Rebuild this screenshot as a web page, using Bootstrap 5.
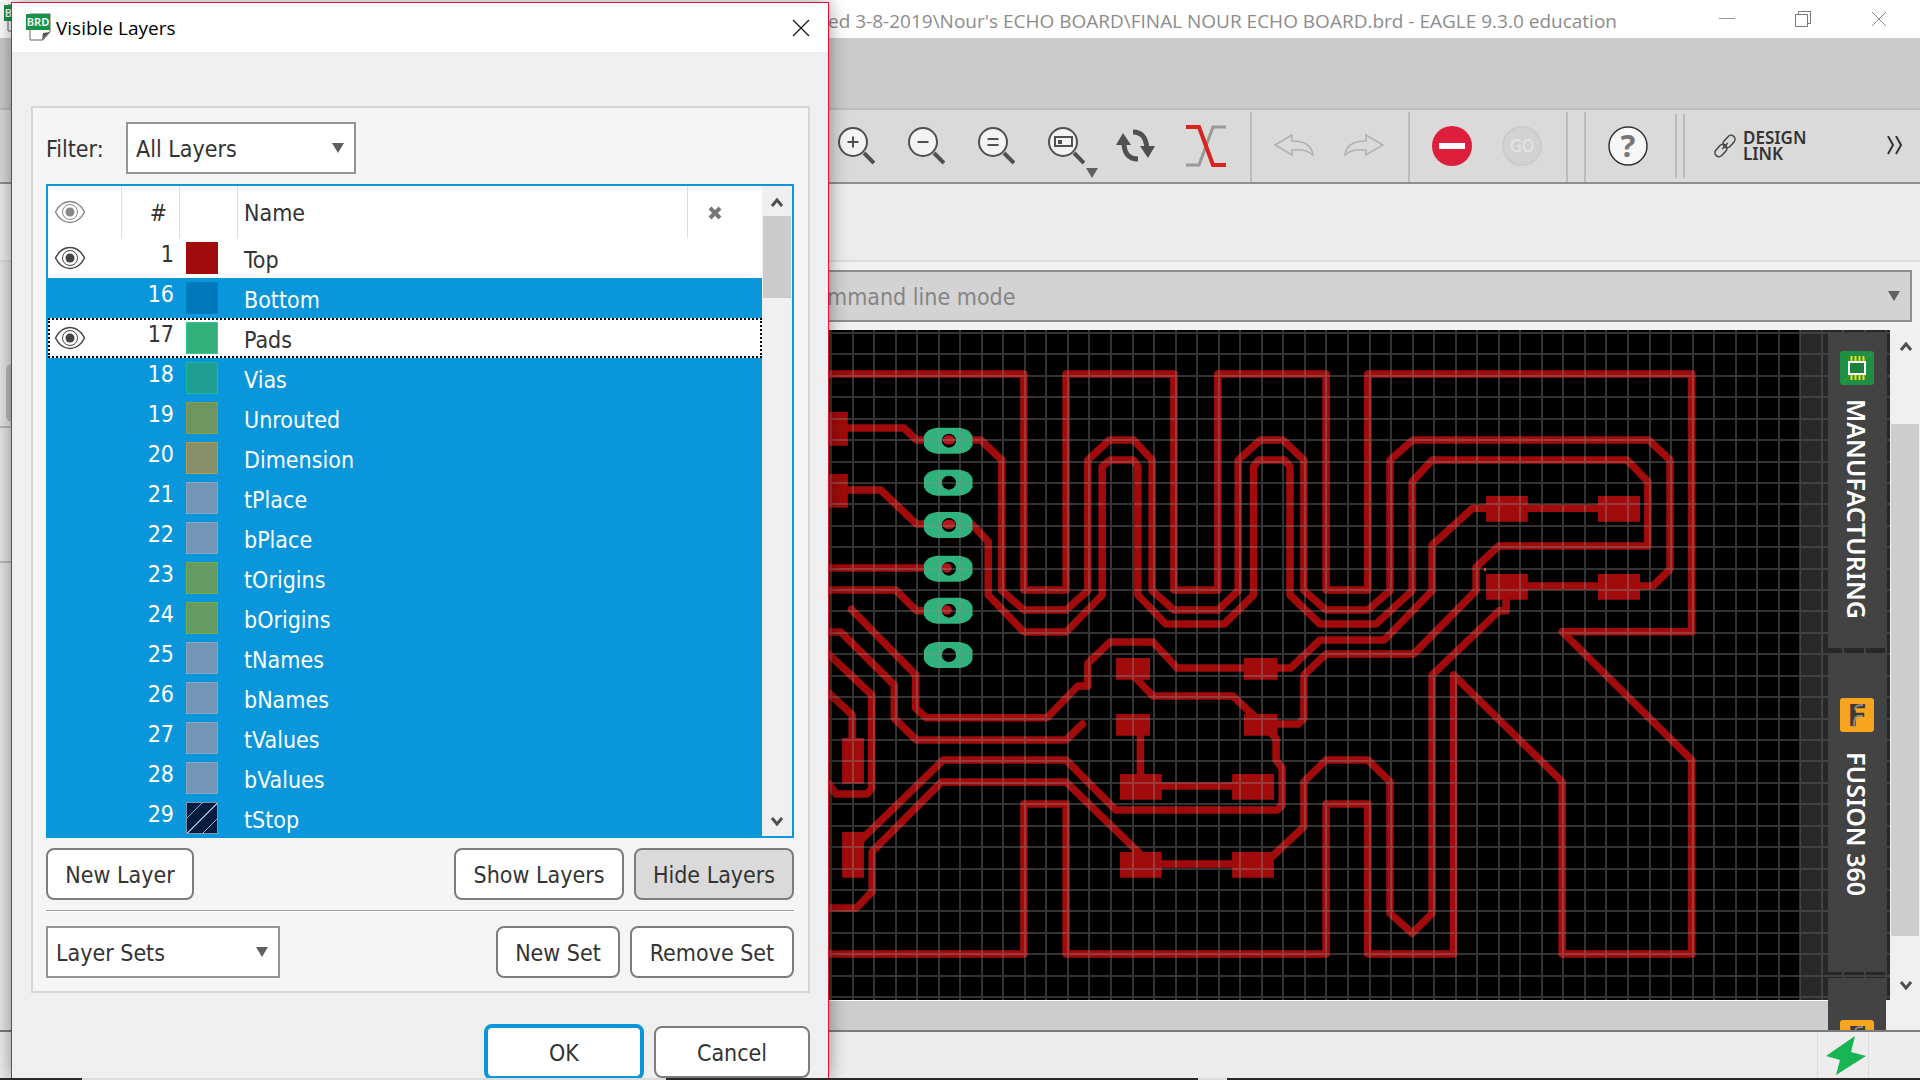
<!DOCTYPE html>
<html lang="en">
<head>
<meta charset="utf-8">
<meta name="viewport" content="width=device-width, initial-scale=1">
<title>EAGLE board editor - Visible Layers</title>
<link href="https://cdn.jsdelivr.net/npm/bootstrap@5.3.0/dist/css/bootstrap.min.css" rel="stylesheet">
<script src="https://cdn.jsdelivr.net/npm/bootstrap@5.3.0/dist/js/bootstrap.bundle.min.js"></script>
<style>
  :root { --ui: "DejaVu Sans Condensed", "Noto Sans", sans-serif; --win: "Open Sans", "Noto Sans", sans-serif; --accent: #0996db; --edge: #8f8f8f; }
  body { font-family: var(--ui); font-size: 23px; line-height: 28px; color: #333; background: #ededed; overflow: hidden; }
  svg { display: block; flex: none; }
  button { font-family: inherit; }

  /* main window */
  .app-title { height: 38px; background: #fff; color: #8c8c8c; font: 19px/38px var(--win); padding: 0 3px 0 4px; }
  .app-title .caption-text { margin-left: 796px; padding-top: 2px; }
  .win-btn { border: 0; background: none; padding: 0; width: 76px; height: 38px; display: flex; align-items: center; justify-content: center; }
  .menu-band { height: 72px; background: #cbcbcb; border-bottom: 2px solid #bdbdbd; }
  .tool-band { height: 74px; background: #dadada; border-bottom: 2px solid var(--edge); padding-left: 821px; }
  .tool-btn { width: 70px; height: 72px; border: 0; padding: 0; background: none; display: flex; align-items: center; justify-content: center; position: relative; }
  .tool-btn .drop-mark { position: absolute; right: 3px; bottom: 4px; }
  .tool-sep { width: 2px; height: 70px; background: #bcbcbc; margin: 2px 7px 0 9px; }
  .tool-sep.thin { height: 64px; margin: 4px 6px 4px 0; }
  .thin-pair { margin: 0 23px 0 12px; }
  .design-btn { width: auto; gap: 7px; }
  .link-label { font: 600 17px/16px "Noto Sans", sans-serif; color: #333; text-align: left; }
  .opt-band { height: 78px; background: #ededed; border-bottom: 2px solid #dcdcdc; }
  .palette { width: 14px; background: #e6e6e6; padding-top: 102px; }
  .palette .active-tool { height: 58px; width: 20px; margin-left: 6px; background: #bdbdbd; border-radius: 6px; }
  .palette .rule { height: 2px; background: #bbb; margin-bottom: 133px; }
  .work-col { background: #f2f2f2; }
  .cmd-row { padding: 8px 8px 8px 0; }
  .form-select { --bs-form-select-bg-img: url("data:image/svg+xml,%3Csvg xmlns='http://www.w3.org/2000/svg' viewBox='0 0 12 10'%3E%3Cpath d='M0 0h12L6 10z' fill='%23606060'/%3E%3C/svg%3E"); }
  .cmd-box.form-select { height: 52px; border: 2px solid var(--edge); border-radius: 0; background-color: #d3d3d3; color: #858585; font-size: 23px; line-height: 28px; padding: 11px 40px 9px 811px; background-position: right 10px center; background-size: 12px 10px; }
  .board { background: #000; }
  .board svg { width: 100%; height: 100%; }
  .h-scroll { height: 30px; background: #cdcdcd; border-top: 1px solid #fff; }
  .v-scroll { width: 30px; background: #f0f0f0; padding: 12px 0 40px 1px; }
  .v-scroll .thumb { background: #cdcdcd; margin: 72px 1px 44px 0; }
  .side-dock { position: absolute; top: 0; right: 0; bottom: 30px; width: 90px; background: rgba(80,80,80,.5); }
  .side-tabs { position: absolute; top: 3px; right: 4px; bottom: 0; width: 58px; overflow: hidden; gap: 6px; }
  .side-tab { background: #434343; color: #fff; border: 0; padding: 18px 0 0; width: 58px; display: flex; flex-direction: column; align-items: center; gap: 14px; flex: none; height: 315px; }
  .side-tab.second { height: 318px; padding-top: 44px; gap: 20px; }
  .side-tab.third { height: 80px; padding-top: 42px; }
  .side-tab span { writing-mode: vertical-rl; font: 600 25px/32px "Noto Sans", sans-serif; }
  .dock-corner { position: absolute; right: 0; bottom: 0; width: 4px; height: 30px; background: #f0f0f0; }
  .status-band { height: 50px; border-top: 2px solid #7c7c7c; background: #ededed; }
  .status-slot { width: 52px; border: solid #dcdcdc; border-width: 0 1px; margin-right: 51px; padding: 4px 0 0 8px; }
  .screen-edge { position: absolute; left: 0; right: 0; bottom: 0; height: 2px; z-index: 5; }
  .screen-edge .dark { background: #2b2729; }
  .screen-edge .pale { background: #dcdcdc; }

  /* Visible Layers window */
  .dlg { position: absolute; left: 11px; top: 2px; bottom: 0; width: 818px; border: 1px solid #e8112d; background: #efefef; box-shadow: 0 0 18px rgba(0,0,0,.4); overflow: hidden; }
  .dlg-title { height: 49px; background: #fff; color: #000; font: 19px/49px var(--win); padding: 0 18px 0 14px; gap: 4px; }
  .dlg-title .dlg-name { padding-top: 2px; }
  .group-panel { margin: 54px 18px 0 19px; border: 2px solid #d6d6d6; background: #f5f5f5; padding: 14px 14px 13px 13px; }
  .pick-box.form-select { height: 52px; width: 230px; border: 2px solid #959595; border-radius: 0; background-color: #fff; color: #333; font-size: 23px; line-height: 28px; padding: 11px 30px 9px 8px; background-position: right 10px center; background-size: 12px 10px; }
  .pick-box.wide.form-select { width: 234px; }
  .filter-label { width: 80px; padding-top: 2px; }
  .layer-box { border: 2px solid var(--accent); height: 654px; background: #fff; margin: 10px 0; overflow: hidden; }
  .layer-grid { width: 100%; table-layout: fixed; border-collapse: separate; border-spacing: 0; }
  .layer-grid th { height: 52px; font-weight: 400; padding: 2px 0 0; border-right: 1px solid #dedede; vertical-align: middle; }
  .layer-grid td { height: 40px; padding: 0; vertical-align: middle; }
  .layer-grid .c-eye { padding: 0 0 0 6px; }
  .layer-grid .c-num { text-align: right; padding-right: 6px; }
  .layer-grid td.c-num { padding-bottom: 8px; }
  .layer-grid th.c-num { padding-right: 12px; }
  .layer-grid .c-name { padding-left: 6px; }
  .layer-grid td.c-name { padding-top: 3px; }
  .layer-grid .c-sw { padding-left: 6px; }
  .layer-grid .c-clear { border-right: 0; padding-left: 20px; }
  .layer-grid tr.picked td { background: var(--accent); color: #fff; }
  .layer-grid tr.current { outline: 2px dotted #000; outline-offset: -2px; }
  .swatch { width: 32px; height: 32px; background: var(--c); border: 1px solid var(--e); }
  .swatch.hatched { background: #031d40 repeating-linear-gradient(135deg, transparent 0 10px, #9fb0c4 10px 11px); }
  .list-scroll { width: 30px; flex: none; background: #f0f0f0; padding: 12px 1px 10px; }
  .list-scroll .thumb { height: 82px; background: #cbcbcb; margin-top: 8px; }
  .btn-eagle { --bs-btn-font-size: 23px; --bs-btn-line-height: 28px; --bs-btn-color: #333; --bs-btn-bg: #fff; --bs-btn-border-color: #7d7d7d; --bs-btn-border-width: 2px; --bs-btn-border-radius: 8px; --bs-btn-hover-bg: #eee; --bs-btn-hover-color: #333; font-family: var(--ui); height: 52px; white-space: nowrap; padding: 11px 8px 9px; }
  .btn-eagle.pressed { --bs-btn-bg: #dadada; }
  .btn-eagle.primary-one { --bs-btn-border-color: var(--accent); --bs-btn-border-width: 4px; height: 56px; width: 160px; }
  .btn-line { gap: 10px; }
  .panel-rule { height: 2px; background: #fff; border-top: 1px solid #a0a0a0; margin: 10px 0 14px; }
  .answer-row { padding: 31px 18px 0 0; gap: 10px; }
  .w-a { width: 148px; } .w-b { width: 170px; } .w-c { width: 160px; } .w-d { width: 124px; } .w-e { width: 164px; } .w-f { width: 156px; margin-bottom: 2px; }
</style>
</head>
<body>
<svg width="0" height="0" class="position-absolute" aria-hidden="true">
  <defs>
    <g id="lens"><circle cx="16" cy="16" r="14" fill="#f3f3f3" stroke="#505050" stroke-width="2"/><path d="M27 27l10 10" stroke="#505050" stroke-width="4"/></g>
    <g id="eye" fill="none"><path d="M1.500 12C5 5 10 1.500 16 1.500S27 5 30.500 12C27 19 22 22.500 16 22.500S5 19 1.500 12z" stroke="currentColor" stroke-width="1.500"/><circle cx="16" cy="12" r="7.500" stroke="currentColor"/><circle cx="16" cy="12" r="4.500" fill="currentColor"/></g>
    <g id="brd"><path d="M4 1h20v18l-7 8H4z" fill="#fff" stroke="#666"/><path d="M24 19l-8 8 1-7z" fill="#555"/><rect x="0" y="1" width="24" height="16" fill="#159447"/><text x="12" y="13" font-family="Noto Sans, sans-serif" font-weight="600" font-size="11" fill="#fff" text-anchor="middle">BRD</text></g>
    <g id="fusion"><rect width="34" height="34" rx="3" fill="#f7a51f"/><text x="17" y="28" font-family="Roboto, sans-serif" font-weight="900" font-size="31" fill="#3f3a36" text-anchor="middle">F</text><path d="M14 29c0-8 1-10 4-11h5M15 12c0-4 2-5 8-5" stroke="#8b8b86" stroke-width="2" fill="none"/></g>
  </defs>
</svg>

<div class="d-flex flex-column vh-100">
  <header class="app-title d-flex">
    <svg width="28" height="30" class="mt-1" aria-hidden="true"><use href="#brd"/></svg>
    <div class="caption-text flex-grow-1 text-nowrap">ed 3-8-2019\Nour's ECHO BOARD\FINAL NOUR ECHO BOARD.brd - EAGLE 9.3.0 education</div>
    <button class="win-btn" aria-label="Minimize"><svg width="16" height="16"><path d="M0 7.500h16" stroke="#999"/></svg></button>
    <button class="win-btn" aria-label="Restore"><svg width="16" height="16" fill="none" stroke="#777"><path d="M.5 3.500h12v12H.5zM3.500 3V.5h12v12H13"/></svg></button>
    <button class="win-btn" aria-label="Close"><svg width="16" height="16"><path d="M1 1l14 14M15 1L1 15" stroke="#888"/></svg></button>
  </header>
  <div class="menu-band"></div>

  <nav class="tool-band d-flex" aria-label="Tools">
    <button class="tool-btn" aria-label="Zoom in"><svg width="38" height="40"><use href="#lens"/><path d="M10.500 16h11M16 10.500v11" stroke="#505050" stroke-width="2"/></svg></button>
    <button class="tool-btn" aria-label="Zoom out"><svg width="38" height="40"><use href="#lens"/><path d="M10.500 16h11" stroke="#505050" stroke-width="2"/></svg></button>
    <button class="tool-btn" aria-label="Zoom to fit"><svg width="38" height="40"><use href="#lens"/><path d="M10.500 13h11M10.500 19h11" stroke="#505050" stroke-width="2"/></svg></button>
    <button class="tool-btn" aria-label="Zoom select"><svg width="38" height="40"><use href="#lens"/><path d="M8 11h17v9H8z" fill="none" stroke="#505050" stroke-width="2"/><rect x="11" y="14" width="4" height="4" fill="#505050"/></svg><svg class="drop-mark" width="12" height="10"><path d="M0 0h12L6 10z" fill="#606060"/></svg></button>
    <button class="tool-btn" aria-label="Redraw"><svg width="40" height="34"><path d="M17 3c10 0 13 7 14 16M22 30C12 30 8 23 8 14" fill="none" stroke="#505050" stroke-width="5"/><path d="M0 16h15L7 4zM24 17h15l-7 12z" fill="#505050"/></svg></button>
    <button class="tool-btn" aria-label="Ratsnest"><svg width="40" height="42" fill="none"><path d="M0 40h13L27 2h13" stroke="#9a9a9a" stroke-width="3"/><path d="M0 2h13l14 38h13" stroke="#d8231f" stroke-width="4"/></svg></button>
    <div class="tool-sep"></div>
    <button class="tool-btn" aria-label="Undo"><svg width="40" height="24" fill="none" stroke="#b0b0b0"><path d="M1 11L18 1v6c13 0 20 5 21 14-6-5-11-6-21-5v5z" stroke-width="1.500"/></svg></button>
    <button class="tool-btn" aria-label="Redo"><svg width="40" height="24" fill="none" stroke="#b0b0b0"><path d="M39 11L22 1v6C9 7 2 12 1 21c6-5 11-6 21-5v5z" stroke-width="1.500"/></svg></button>
    <div class="tool-sep"></div>
    <button class="tool-btn" aria-label="Stop"><svg width="40" height="40"><circle cx="20" cy="20" r="20" fill="#de1f3b"/><rect x="7" y="17" width="26" height="6" fill="#fff"/></svg></button>
    <button class="tool-btn" aria-label="Go"><svg width="40" height="40"><circle cx="20" cy="20" r="19" fill="#d2d2d2" stroke="#cbcbcb" stroke-width="2"/><text x="20" y="26" font-family="DejaVu Sans Condensed, sans-serif" font-size="17" fill="#e6e6e6" text-anchor="middle">GO</text></svg></button>
    <div class="tool-sep"></div>
    <div class="tool-sep"></div>
    <button class="tool-btn" aria-label="Help"><svg width="40" height="40"><circle cx="20" cy="20" r="19" fill="#f7f7f7" stroke="#333" stroke-width="1.500"/><text x="20" y="31" font-family="Noto Sans, sans-serif" font-size="31" font-weight="700" fill="#777" text-anchor="middle">?</text></svg></button>
    <div class="thin-pair d-flex">
      <div class="tool-sep thin"></div><div class="tool-sep thin"></div>
    </div>
    <button class="tool-btn design-btn" aria-label="Design Link">
      <svg width="22" height="24" fill="none" stroke="#444" stroke-width="1.500"><g transform="rotate(-48 11 12)"><rect x="-2" y="8" width="14" height="8" rx="4"/><rect x="10" y="8" width="14" height="8" rx="4"/><path d="M7 12h8"/></g></svg>
      <span class="link-label">DESIGN<br>LINK</span>
    </button>
    <button class="tool-btn ms-auto w-auto pe-3" aria-label="More"><svg width="18" height="20"><path d="M2 0l5 9-5 9M10 0l5 9-5 9" fill="none" stroke="#333" stroke-width="2"/></svg></button>
  </nav>
  <div class="opt-band"></div>

  <main class="d-flex flex-grow-1">
    <div class="palette overflow-hidden">
      <div class="active-tool mb-1"></div>
      <div class="rule"></div>
      <div class="rule"></div>
    </div>
    <div class="work-col flex-grow-1 d-flex flex-column">
      <div class="cmd-row">
        <select class="form-select cmd-box" aria-label="Command line"><option>mmand line mode</option></select>
      </div>
      <div class="d-flex flex-grow-1">
        <div class="position-relative flex-grow-1 d-flex flex-column">
          <div class="board flex-grow-1 position-relative">
            <svg class="position-absolute top-0 start-0" viewBox="14 330 1876 670" preserveAspectRatio="xMinYMin slice" role="img" aria-label="Circuit board">
              <g transform="translate(820 330) scale(.35714 .33333)">
                <g fill="none" stroke="#a10b0b" stroke-width="7.500" stroke-linecap="round" stroke-linejoin="round">
                  <path vector-effect="non-scaling-stroke" d="M24 132H571V780H689V132H991V780H1114V132H1417V780H1534V132H2441V905H2078L2441 1290V1872H2078V1355L1774 1035V1872H1534V1422H1417V1872H689V1422H571V1872H24"/>
                  <path vector-effect="non-scaling-stroke" d="M78 294H235L270 330H450L509 390V782L571 840H689L750 782V390L810 330H878L930 390V782L991 840H1114L1171 782V390L1233 330H1296L1355 390V782L1417 840H1534L1596 782V390L1660 330H2320L2380 390V718L2332 768H1921V842H1902L1714 1035V1750L1658 1810L1596 1750V1355L1534 1290H1417L1355 1355V1490L1265 1580"/>
                  <path vector-effect="non-scaling-stroke" d="M78 480H170L270 582H425L471 635V795L571 906H689L790 795V410L812 390H878L890 410V795L968 882H1132L1214 795V410L1228 390H1300L1316 410V795L1400 882H1557L1658 782V455L1714 390H2260L2318 455V648H1900L1837 712V782L1662 972H1417L1355 1035V1165L1340 1182H1234"/>
                  <path vector-effect="non-scaling-stroke" d="M2237 535H1827L1714 645V782L1580 930H1400L1318 1014H1000L932 936H812L750 1000V1068H722L636 1163H297L268 1135V1035L88 838"/>
                  <path vector-effect="non-scaling-stroke" d="M24 714H355M24 780H212L270 842H355M24 906H58L208 1065V1165L270 1230H689L735 1182M24 972L145 1095V1375L132 1392H45L24 1360M24 1088L90 1155V1225"/>
                  <path vector-effect="non-scaling-stroke" d="M110 1535L345 1290H689L828 1440H1280L1294 1425V1315L1277 1290V1225L1250 1195M24 1734H102L146 1685V1565L340 1356H689L895 1570M897 1217V1340M957 1368H1160M957 1602H1160M885 1045L932 1098H1156L1215 1158"/>
                </g>
                <path fill="#a10b0b" d="M24 246h54v101H24zM24 432h54v101H24zM62 1224h61v137H62zM62 1506h61v137H62zM829 984h95v65h-95zM1187 984h94v65h-94zM829 1152h95v65h-95zM1187 1152h94v65h-94zM840 1332h117v77H840zM1154 1332h117v77h-117zM840 1566h117v77H840zM1154 1566h117v77h-117zM1865 498h117v77h-117zM2178 498h118v77h-118zM1865 732h117v77h-117zM2178 732h118v77h-118z"/>
                <rect x="1859" y="714" width="6" height="10" fill="#e0301c"/>
                <g id="pads"></g>
              </g>
              <path id="gridlines" fill="none" stroke="#8c8c8c" stroke-opacity=".36" stroke-width="2" shape-rendering="crispEdges"/>
            </svg>
          </div>
          <div class="h-scroll"></div>
          <div class="side-dock"></div>
          <div class="dock-corner"></div>
          <div class="side-tabs d-flex flex-column">
            <button class="side-tab">
              <svg width="34" height="34"><rect width="34" height="34" rx="3" fill="#1f8f45"/><path d="M2 32L32 2" stroke="#2aa455" stroke-width="1"/><path d="M11.500 5v7M15.500 5v7M19.500 5v7M23.500 5v7M11.500 22v7M15.500 22v7M19.500 22v7M23.500 22v7" stroke="#f5e400" stroke-width="2"/><rect x="9" y="11" width="16" height="12" fill="#1b7f3d" stroke="#fff" stroke-width="2"/></svg>
              <span>MANUFACTURING</span>
            </button>
            <button class="side-tab second">
              <svg width="34" height="34"><use href="#fusion"/></svg>
              <span>FUSION 360</span>
            </button>
            <button class="side-tab third" aria-label="Fusion Team">
              <svg width="34" height="34"><use href="#fusion"/></svg>
            </button>
          </div>
        </div>
        <div class="v-scroll d-flex flex-column">
          <svg width="12" height="10" class="mx-auto"><path d="M1 8l5-6 5 6" fill="none" stroke="#505050" stroke-width="3"/></svg>
          <div class="thumb flex-grow-1"></div>
          <svg width="12" height="10" class="mx-auto"><path d="M1 2l5 6 5-6" fill="none" stroke="#505050" stroke-width="3"/></svg>
        </div>
      </div>
    </div>
  </main>
  <footer class="status-band d-flex justify-content-end">
    <div class="status-slot"><svg width="40" height="40"><path d="M29 0L0 20l14 4-4 15L40 20l-15-4z" fill="#16b552"/></svg></div>
  </footer>
</div>

<section class="dlg" role="dialog" aria-label="Visible Layers">
  <div class="dlg-title d-flex align-items-center">
    <svg width="26" height="29" aria-hidden="true"><use href="#brd"/></svg>
    <div class="flex-grow-1 dlg-name">Visible Layers</div>
    <button class="border-0 bg-transparent p-0" aria-label="Close"><svg width="18" height="18"><path d="M1 1l16 16M17 1L1 17" stroke="#111" stroke-width="1.200"/></svg></button>
  </div>
  <div class="group-panel">
    <div class="d-flex align-items-center">
      <label class="filter-label" for="filter">Filter:</label>
      <select id="filter" class="form-select pick-box"><option>All Layers</option></select>
    </div>
    <div class="layer-box d-flex">
      <div class="flex-grow-1">
        <table class="layer-grid">
          <colgroup><col style="width:74px"><col style="width:58px"><col style="width:58px"><col><col style="width:74px"></colgroup>
          <thead><tr>
            <th class="c-eye"><svg width="32" height="24" color="#888" role="img" aria-label="Visible"><use href="#eye"/></svg></th>
            <th class="c-num">#</th><th></th><th class="c-name">Name</th>
            <th class="c-clear"><svg width="14" height="14" role="img" aria-label="Clear"><path d="M2 2l10 10M12 2L2 12" stroke="#777" stroke-width="4"/></svg></th>
          </tr></thead>
          <tbody id="layers"></tbody>
        </table>
      </div>
      <div class="list-scroll d-flex flex-column">
        <svg width="12" height="10" class="mx-auto"><path d="M1 8l5-6 5 6" fill="none" stroke="#505050" stroke-width="3"/></svg>
        <div class="thumb"></div>
        <svg width="12" height="10" class="mx-auto mt-auto"><path d="M1 2l5 6 5-6" fill="none" stroke="#505050" stroke-width="3"/></svg>
      </div>
    </div>
    <div class="btn-line d-flex">
      <button class="btn btn-eagle w-a me-auto">New Layer</button>
      <button class="btn btn-eagle w-b">Show Layers</button>
      <button class="btn btn-eagle w-c pressed">Hide Layers</button>
    </div>
    <div class="panel-rule"></div>
    <div class="btn-line d-flex">
      <select class="form-select pick-box wide me-auto" aria-label="Layer sets"><option>Layer Sets</option></select>
      <button class="btn btn-eagle w-d">New Set</button>
      <button class="btn btn-eagle w-e">Remove Set</button>
    </div>
  </div>
  <div class="answer-row d-flex justify-content-end align-items-end">
    <button class="btn btn-eagle primary-one">OK</button>
    <button class="btn btn-eagle w-f">Cancel</button>
  </div>
</section>

<div class="screen-edge d-flex" aria-hidden="true">
  <div class="dark" style="width:82px"></div><div class="pale" style="width:584px"></div><div class="dark" style="width:532px"></div><div class="pale" style="width:29px"></div><div class="dark flex-grow-1"></div>
</div>

<script>
  const layers = [
    [1, "Top", "#a10b0b", "#a10b0b", "shown"], [16, "Bottom", "#0077bb", "#0080c4"], [17, "Pads", "#33b07c", "#2fca8c", "shown current"],
    [18, "Vias", "#219e92", "#1fb79b"], [19, "Unrouted", "#6e955f", "#8a9c4c"], [20, "Dimension", "#87906a", "#b09a50"],
    [21, "tPlace", "#7495b5", "#8aa5bf"], [22, "bPlace", "#7495b5", "#8aa5bf"], [23, "tOrigins", "#649961", "#74ab4b"],
    [24, "bOrigins", "#649961", "#74ab4b"], [25, "tNames", "#7495b5", "#8aa5bf"], [26, "bNames", "#7495b5", "#8aa5bf"],
    [27, "tValues", "#7495b5", "#8aa5bf"], [28, "bValues", "#7495b5", "#8aa5bf"], [29, "tStop", "hatched", "#8494a8"]
  ];
  document.getElementById("layers").innerHTML = layers.map(([n, name, c, e, s]) => `
    <tr class="${s || "picked"}">
      <td class="c-eye">${s ? '<svg width="32" height="24" color="#444"><use href="#eye"/></svg>' : ""}</td>
      <td class="c-num">${n}</td>
      <td class="c-sw"><div class="swatch ${c === "hatched" ? c : ""}" style="--c:${c};--e:${e}"></div></td>
      <td class="c-name">${name}</td><td></td>
    </tr>`).join("");

  // through-hole pads: centre y and the trace end that shows in the drill hole
  document.getElementById("pads").innerHTML = [[332, 1], [458, 0], [585, 1], [716, 2], [842, 2], [975, 0]].map(([y, t]) =>
    `<path d="M291 ${y - 14}Q300 ${y - 36} 327 ${y - 39}H390Q418 ${y - 36} 427 ${y - 14}V${y + 14}Q418 ${y + 36} 390 ${y + 39}H327Q300 ${y + 36} 291 ${y + 14}z" fill="#2fb27c"/><ellipse cx="361" cy="${y}" rx="20" ry="21" fill="#000"/>` +
    (t ? `<ellipse cx="${t === 1 ? 361 : 355}" cy="${y - 2}" rx="${t === 1 ? 18 : 14}" ry="14" fill="#b0181c"/>` : "")).join("");

  let d = "";
  for (let i = -38; i < 50; i++) d += `M${Math.round(831 + i * 21.54)} 330V1000`;
  for (let j = 0; j < 32; j++) d += `M14 ${Math.round(333 + j * 21.42)}H1890`;
  document.getElementById("gridlines").setAttribute("d", d);
</script>
</body>
</html>
